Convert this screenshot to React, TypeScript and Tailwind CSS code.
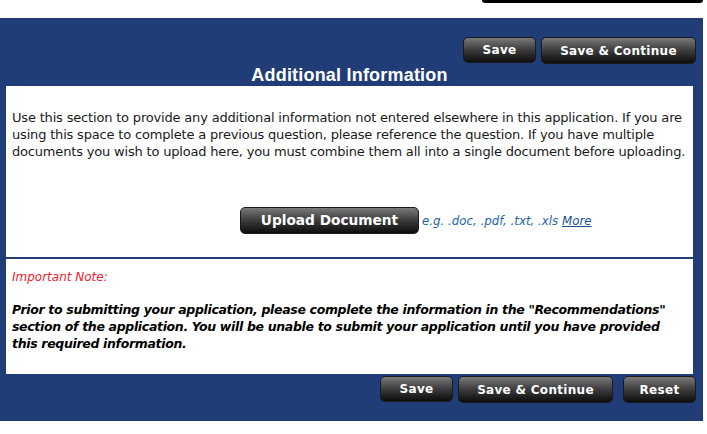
import React from 'react';

const dv = { fontFamily: '"DejaVu Sans", Verdana, sans-serif' };

const Btn: React.FC<{ label: string; className?: string }> = ({ label, className = '' }) => (
  <button
    className={`flex items-center justify-center rounded-[5px] border border-[#1a1a1a] bg-gradient-to-b from-[#7a7a7a] via-[#3c3c3c] to-[#0e0e0e] text-white font-bold text-[12px] tracking-[0.3px] ${className}`}
    style={dv}
  >
    {label}
  </button>
);

export default function App() {
  return (
    <div className="w-[707px] h-[434px] bg-white overflow-hidden" style={dv}>
      <div className="h-[18px] flex">
        <div className="ml-[482px] w-[221px] h-[3px] bg-black rounded-b-[4px]" />
      </div>
      <div className="w-[703px] bg-[#213d77] pt-[19px] pb-[18px]">
        <div className="flex justify-end items-start gap-[5px] pr-[7px] h-[27px]">
          <Btn label="Save" className="w-[73px] h-[26px]" />
          <Btn label="Save & Continue" className="w-[155px] h-[27px]" />
        </div>
        <h2
          className="ml-[6px] w-[687px] h-[22px] text-center text-white font-bold text-[18px] tracking-[0.2px] leading-[22px]"
          style={{ fontFamily: '"Liberation Sans", Arial, sans-serif' }}
        >
          Additional Information
        </h2>
        <div className="ml-[6px] w-[687px] h-[171px] bg-white px-[6px] pt-[23px]">
          <p className="text-[13px] tracking-[-0.18px] leading-[17px] text-[#1a1a1a] whitespace-nowrap">
            Use this section to provide any additional information not entered elsewhere in this application. If you are
            <br />
            using this space to complete a previous question, please reference the question. If you have multiple
            <br />
            documents you wish to upload here, you must combine them all into a single document before uploading.
          </p>
          <div className="flex items-center mt-[47px] ml-[228px]">
            <button
              className="w-[179px] h-[27px] rounded-[5px] border border-[#1a1a1a] bg-gradient-to-b from-[#7a7a7a] via-[#3c3c3c] to-[#0e0e0e] text-white font-bold text-[13.7px]"
              style={dv}
            >
              Upload Document
            </button>
            <span className="ml-[3px] text-[11.8px] italic text-[#2566a5] pt-[2px]">
              e.g. .doc, .pdf, .txt, .xls <span className="underline text-[#1d4f8c]">More</span>
            </span>
          </div>
        </div>
        <div className="ml-[6px] w-[687px] h-[115px] mt-[2px] bg-white px-[6px] pt-[10px]">
          <p className="text-[12px] leading-[16px] italic text-[#ee1c2e]">Important Note:</p>
          <p className="mt-[16px] text-[12.5px] tracking-[-0.33px] leading-[17px] italic font-bold text-black whitespace-nowrap">
            Prior to submitting your application, please complete the information in the "Recommendations"
            <br />
            section of the application. You will be unable to submit your application until you have provided
            <br />
            this required information.
          </p>
        </div>
        <div className="flex justify-end items-start pr-[7px] mt-[2px] h-[27px]">
          <Btn label="Save" className="w-[73px] h-[26px]" />
          <Btn label="Save & Continue" className="w-[155px] h-[27px] ml-[5px]" />
          <Btn label="Reset" className="w-[73px] h-[27px] ml-[10px]" />
        </div>
      </div>
    </div>
  );
}
